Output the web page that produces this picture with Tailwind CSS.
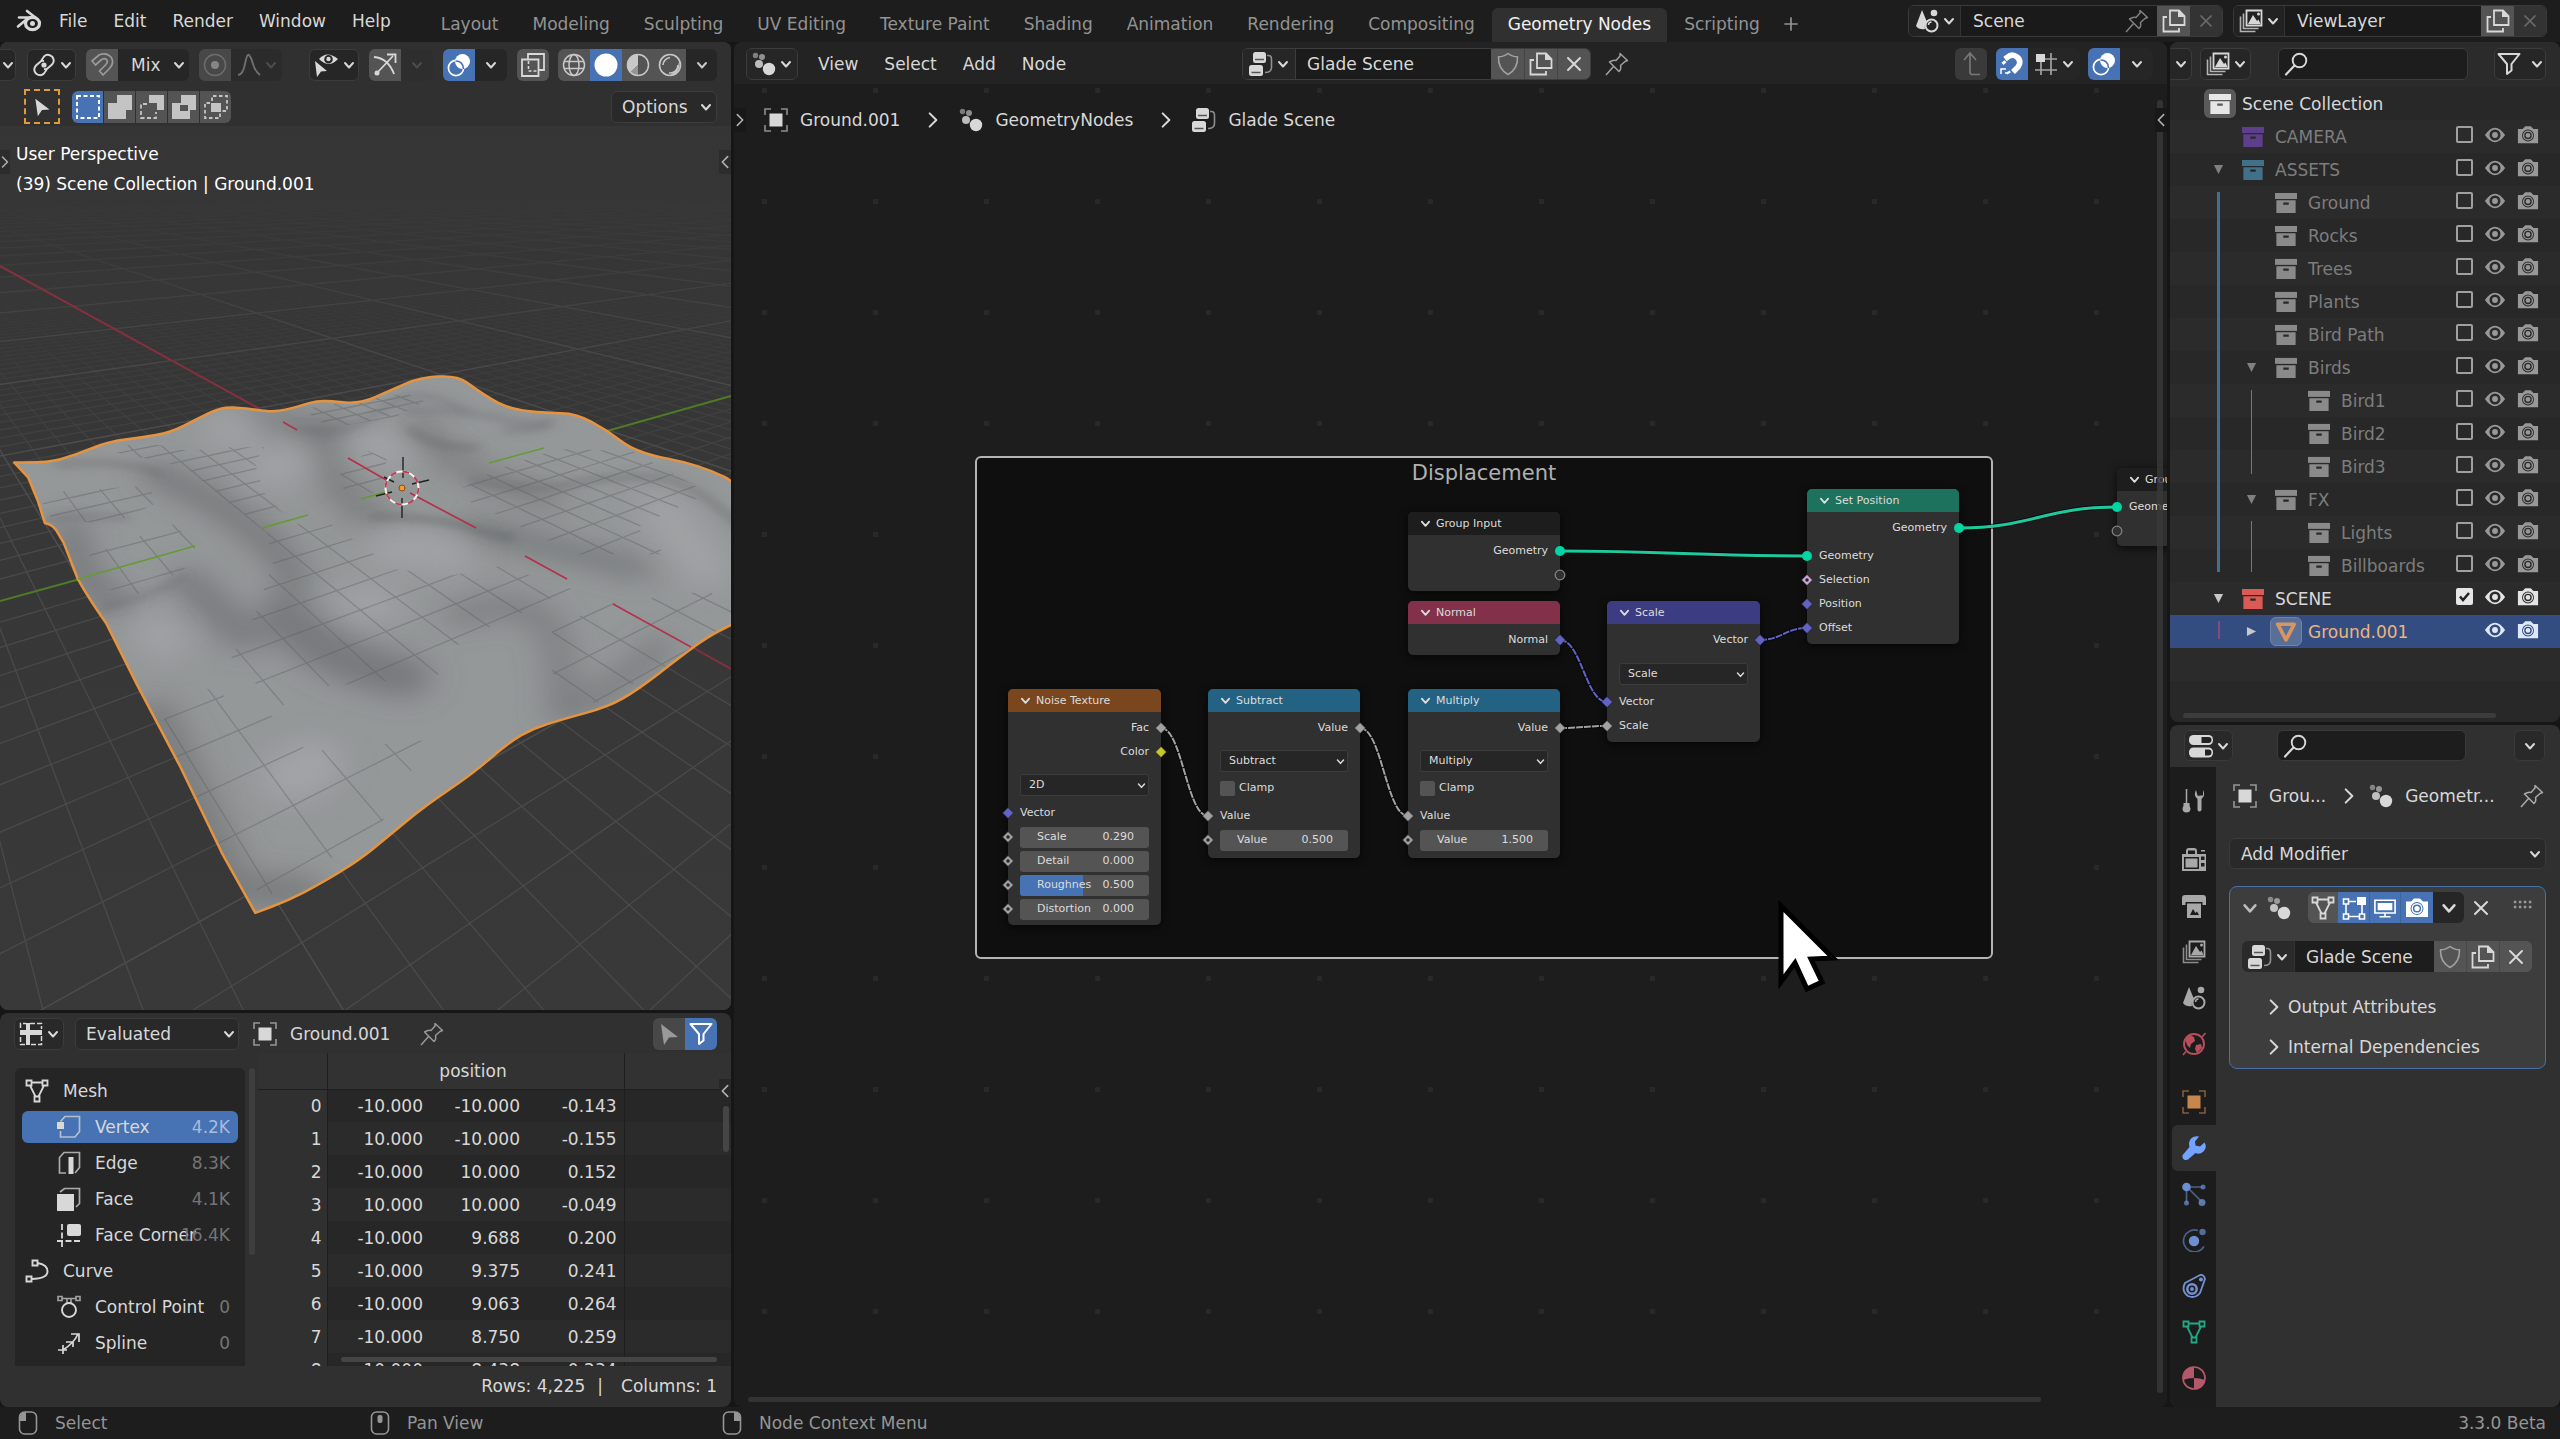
<!DOCTYPE html>
<html lang="en">
<head>
<meta charset="utf-8">
<meta name="viewport" content="width=device-width, initial-scale=1">
<title>Blender</title>
<script src="https://cdn.jsdelivr.net/npm/@tailwindcss/browser@4"></script>
</head>
<body class="flex h-screen flex-col overflow-hidden bg-[#161616] font-['DejaVu_Sans',sans-serif] text-[17px] leading-6 text-[#d8d8d8]">

<!-- Icon sheet -->
<svg class="hidden" aria-hidden="true">
  <symbol id="logo" viewBox="0 0 26 24"><path fill="none" stroke="currentColor" stroke-width="2.600" stroke-linecap="round" stroke-linejoin="round" d="M11 2l9 7M3 8.500h12M2 17.500L11 10"/><ellipse cx="16.500" cy="14.500" rx="7" ry="6.200" fill="none" stroke="currentColor" stroke-width="3.200"/><circle cx="16.500" cy="14.500" r="2.500" fill="currentColor"/></symbol>
  <symbol id="down" viewBox="0 0 12 12"><path fill="none" stroke="currentColor" stroke-width="2" stroke-linecap="round" stroke-linejoin="round" d="M2 4l4 4.500L10 4"/></symbol>
  <symbol id="right" viewBox="0 0 12 18"><path fill="none" stroke="currentColor" stroke-width="1.800" stroke-linecap="round" stroke-linejoin="round" d="M3 3l6 6-6 6"/></symbol>
  <symbol id="left" viewBox="0 0 12 18"><path fill="none" stroke="currentColor" stroke-width="1.800" stroke-linecap="round" stroke-linejoin="round" d="M9 3L3 9l6 6"/></symbol>
  <symbol id="x" viewBox="0 0 24 24"><path fill="none" stroke="currentColor" stroke-width="2" stroke-linecap="round" d="M6 6l12 12M18 6L6 18"/></symbol>
  <symbol id="plus" viewBox="0 0 24 24"><path fill="none" stroke="currentColor" stroke-width="2" d="M4 12h16M12 4v16"/></symbol>
  <symbol id="obj" viewBox="0 0 24 24"><path fill="currentColor" d="M5.500 5.500h13v13h-13z"/><path fill="none" stroke="currentColor" opacity=".6" stroke-width="1.600" d="M1 7V1h6M17 1h6v6M23 17v6h-6M7 23H1v-6"/></symbol>
  <symbol id="geo" viewBox="0 0 24 24"><g fill="currentColor"><circle cx="3.500" cy="3.500" r="2.700" opacity=".5"/><circle cx="10" cy="5" r="3" opacity=".6"/><circle cx="7" cy="12" r="4" opacity=".85"/><circle cx="17" cy="17" r="6.200"/></g></symbol>
  <symbol id="tree" viewBox="0 0 24 24"><g fill="currentColor"><rect x="4" y="0" width="13" height="11" rx="2.500"/><rect x="0" y="13" width="14" height="11" rx="2.500"/></g><path stroke="#555" stroke-width="1.600" d="M6 7.500h9M2.500 20.500h9"/><path fill="none" stroke="currentColor" opacity=".6" stroke-width="1.600" d="M18 3.500h1.500q3 0 3 4v8q0 5-6.500 5"/></symbol>
  <symbol id="pin" viewBox="0 0 24 24"><path fill="none" stroke="currentColor" stroke-width="1.500" stroke-linejoin="round" d="M1 23l8-9M4.500 10q4-2.500 6.500-1.500L15 4V1.500l7.500 7L20 9.500l-4.500 4q1 4-1.500 6z"/></symbol>
  <symbol id="shield" viewBox="0 0 24 24"><path fill="none" stroke="currentColor" stroke-width="1.600" stroke-linejoin="round" d="M12 1.500q4 3.300 9.500 3.300Q22 17 12 22.500 2 17 2.500 4.800 8 4.800 12 1.500z"/></symbol>
  <symbol id="copy" viewBox="0 0 24 24"><path fill="none" stroke="currentColor" stroke-width="1.800" d="M8 1.500h9l5.500 5.500v9H8zM5 8H1.500v14.500H17V19"/><path fill="currentColor" d="M16 1l7 7h-7z"/></symbol>
  <symbol id="magnet" viewBox="0 0 24 24"><path fill="none" stroke="currentColor" stroke-width="1.700" stroke-linejoin="round" d="M2 8l7-6q7-3 12 2 4 6-2 12l-6 6-3.500-4 6-6q3-3 1-5.500-2.500-2-5.500.500L5.500 12z"/></symbol>
  <symbol id="magnetOn" viewBox="0 0 24 24"><path fill="none" stroke="currentColor" stroke-width="5.500" d="M5 7l2-1.500Q12 1 17 5t1 10l-5 5"/><path fill="none" stroke="currentColor" stroke-width="4" d="M3 9.500l2 2.200M9 21.500l-1-2"/><path fill="none" stroke="currentColor" stroke-width="1.500" d="M1 22v-5h5M6 22v-2"/></symbol>
  <symbol id="link" viewBox="0 0 24 24"><circle cx="12" cy="12" r="2.600" fill="currentColor"/><path fill="none" stroke="currentColor" stroke-width="1.900" d="M9 8l3-4.500q3.500-3.500 8 0 3.500 4 0 8L16 15q-1.500 1.500-4 1M15 16l-3 4.500q-3.500 3.500-8 0-3.500-4 0-8L8 9q1.500-1.500 4-1"/></symbol>
  <symbol id="prop" viewBox="0 0 24 24"><circle cx="12" cy="12" r="10.500" fill="none" stroke="currentColor" opacity=".6" stroke-width="1.500"/><circle cx="12" cy="12" r="4" fill="currentColor"/></symbol>
  <symbol id="falloff" viewBox="0 0 24 24"><path fill="none" stroke="currentColor" stroke-width="1.800" d="M1 22q5 0 7-11t4-9 4 9 7 11"/></symbol>
  <symbol id="visSel" viewBox="0 0 26 24"><path fill="currentColor" fill-rule="evenodd" d="M6 6q8-9 19 0-9 10-19 0zm9.500-4a4.300 4.300 0 100 8.600 4.300 4.300 0 000-8.600z"/><circle cx="15.500" cy="6" r="2.200" fill="currentColor"/><path fill="currentColor" d="M2 8l12 10-6 .5L4 24z"/></symbol>
  <symbol id="gizmo" viewBox="0 0 24 24"><path fill="none" stroke="currentColor" stroke-width="1.800" d="M1 4q14 1 20 17M3.500 20.500L20 3M14 1.500h8.500V10"/><circle cx="4" cy="20" r="2.500" fill="currentColor"/></symbol>
  <symbol id="overlay" viewBox="0 0 24 24"><circle cx="15.500" cy="8.500" r="7.500" fill="currentColor"/><circle cx="9" cy="15" r="7.600" fill="none" stroke="currentColor" stroke-width="1.700"/><path fill="none" stroke="#4772b3" stroke-width="1.600" d="M8.500 8a7.500 7.500 0 018 8"/></symbol>
  <symbol id="xray" viewBox="0 0 24 24"><path fill="none" stroke="currentColor" stroke-width="1.800" d="M7 6V1h16v16h-5M1 6.500h16.500V23H1z"/><path fill="none" stroke="currentColor" stroke-width="1.600" stroke-dasharray="3 2" d="M7.500 8v10h9"/></symbol>
  <symbol id="wire" viewBox="0 0 24 24"><g fill="none" stroke="currentColor" stroke-width="1.500"><circle cx="12" cy="12" r="10.500"/><ellipse cx="12" cy="12" rx="5" ry="10.500"/><path d="M2 8.500h20M2 15.500h20"/></g></symbol>
  <symbol id="solid" viewBox="0 0 24 24"><circle cx="12" cy="12" r="11.500" fill="currentColor"/></symbol>
  <symbol id="matp" viewBox="0 0 24 24"><circle cx="12" cy="12" r="10.500" fill="none" stroke="currentColor" stroke-width="1.500"/><path fill="currentColor" d="M12 1v11L4 19.500A11 11 0 0112 1z"/><path fill="currentColor" opacity=".55" d="M12 12v11a11 11 0 01-8-3.500z"/></symbol>
  <symbol id="rend" viewBox="0 0 24 24"><circle cx="12" cy="12" r="10.500" fill="none" stroke="currentColor" stroke-width="1.600"/><path fill="none" stroke="currentColor" stroke-width="1.600" d="M5 12a8 8 0 017-7.500M20 12a8 8 0 01-9 8"/><path fill="currentColor" d="M12 22a10 10 0 009-13q-1 9-9 13z"/></symbol>
  <symbol id="scene" viewBox="0 0 24 24"><path fill="currentColor" d="M7 1l5 12q-3 3-2 7-6 1-9-3z"/><circle cx="19" cy="4" r="3.300" fill="currentColor"/><circle cx="16.500" cy="16.500" r="6" fill="none" stroke="currentColor" stroke-width="2"/><path fill="none" stroke="currentColor" stroke-width="1.500" d="M13.500 16a3 3 0 013-3"/></symbol>
  <symbol id="layers" viewBox="0 0 24 24"><path fill="none" stroke="currentColor" stroke-width="1.800" d="M7.500 1.500h15v15h-15z"/><path fill="currentColor" d="M9 15l5-9 4 6 1.500-1.500 2 4.500z"/><circle cx="19.500" cy="5" r="1.500" fill="currentColor"/><path fill="none" stroke="currentColor" opacity=".8" stroke-width="1.600" d="M4.500 4.500v15h15M1.500 7.500v15h15"/></symbol>
  <symbol id="search" viewBox="0 0 24 24"><circle cx="15.500" cy="8.500" r="6.800" fill="none" stroke="currentColor" stroke-width="1.900"/><path stroke="currentColor" stroke-width="2.200" stroke-linecap="round" d="M10.500 13.500L2 22.500"/></symbol>
  <symbol id="funnel" viewBox="0 0 24 24"><path fill="none" stroke="currentColor" stroke-width="2" stroke-linejoin="round" d="M1.500 2h21l-8 10v6.500L10 22V12z"/></symbol>
  <symbol id="box" viewBox="0 0 24 24"><path fill="currentColor" d="M0 1h24v6.500H0z"/><path fill="currentColor" fill-rule="evenodd" d="M1.500 9h21v14h-21zM9 11.500h6V14H9z"/></symbol>
  <symbol id="eye" viewBox="0 0 24 24"><path fill="currentColor" fill-rule="evenodd" d="M1 12q11-16 22 0-11 16-22 0zm11-6a6 6 0 100 12 6 6 0 000-12z"/><circle cx="12" cy="12" r="3.200" fill="currentColor"/></symbol>
  <symbol id="cam" viewBox="0 0 24 24"><path fill="currentColor" fill-rule="evenodd" d="M1 5.500h5L9 2.500h6l3 3h5V21H1zM12 6a6.500 6.500 0 100 13 6.500 6.500 0 000-13z"/><circle cx="12" cy="12.500" r="4.800" fill="none" stroke="currentColor" stroke-width="1.400"/><circle cx="12" cy="12.500" r="2.600" fill="currentColor"/></symbol>
  <symbol id="mesh" viewBox="0 0 24 24"><path fill="none" stroke="currentColor" stroke-width="1.800" d="M1.500 1.500h5v5h-5zM17.500 1.500h5v5h-5zM9.500 17.500h5v5h-5zM6.500 3.500h11M5 6.500l5.500 11M19 6.500l-5.500 11"/></symbol>
  <symbol id="tri" viewBox="0 0 24 24"><path fill="none" stroke="currentColor" stroke-width="4" stroke-linejoin="round" d="M3 3.500h18L12 20.500z"/></symbol>
  <symbol id="up" viewBox="0 0 24 24"><path fill="none" stroke="currentColor" stroke-width="1.700" d="M5 8l6-7 6 7M11 1v19q0 2.500 2.500 2.500H21"/></symbol>
  <symbol id="gridSnap" viewBox="0 0 24 24"><path fill="currentColor" d="M2 2h9v8H2z"/><path fill="none" stroke="currentColor" opacity=".7" stroke-width="1.700" d="M7 10v13M17 1v22M11 7h12M1 18h22"/></symbol>
  <symbol id="sheet" viewBox="0 0 24 24"><path fill="currentColor" d="M7 1h4v7h12v5H11v10H7V13H1V8h6z"/><path fill="none" stroke="currentColor" stroke-width="1.500" stroke-dasharray="5 2" d="M1.500 6V1.500H7M11 1.500h11.500V7M22.500 14v8.500H12M6 22.500H1.500V14"/></symbol>
  <symbol id="arrow" viewBox="0 0 24 24"><path fill="currentColor" d="M4 2l17 13-9 .5L7 23z"/></symbol>
  <symbol id="vert" viewBox="0 0 24 24"><path fill="none" stroke="currentColor" opacity=".75" stroke-width="1.700" d="M3.500 6.500L8 1.500h14.500v15L18 22H3.500v-6"/><path fill="currentColor" d="M0 7h7v7H0z"/></symbol>
  <symbol id="edge" viewBox="0 0 24 24"><path fill="none" stroke="currentColor" opacity=".75" stroke-width="1.700" d="M9 22H2.500V6.500L7 1.500h15.500v15L18 22"/><path fill="currentColor" d="M11.500 6h5v17h-5z"/></symbol>
  <symbol id="face" viewBox="0 0 24 24"><path fill="currentColor" d="M0 7h17v17H0z"/><path fill="none" stroke="currentColor" opacity=".75" stroke-width="1.700" d="M3 5l4.500-3.500h15v15L19 20"/></symbol>
  <symbol id="corner" viewBox="0 0 24 24"><rect x="10" y="1" width="14" height="12" rx="2" fill="currentColor"/><path fill="none" stroke="currentColor" stroke-width="1.800" stroke-dasharray="6 2.500" d="M5 1v23M0 18h24"/></symbol>
  <symbol id="curve" viewBox="0 0 24 24"><path fill="none" stroke="currentColor" stroke-width="1.900" d="M7.500 1.500h5v5h-5zM1.500 17.500h5v5h-5zM12.500 4q10 1.500 10 8.500T6.500 20"/></symbol>
  <symbol id="cpoint" viewBox="0 0 24 24"><circle cx="12" cy="15" r="7" fill="none" stroke="currentColor" stroke-width="1.900"/><path fill="none" stroke="currentColor" opacity=".7" stroke-width="1.600" d="M1 1.500h4v4H1zM19 1.500h4v4h-4zM5 3.500h14M10 4v4M14 4v4"/></symbol>
  <symbol id="spline" viewBox="0 0 24 24"><path fill="none" stroke="currentColor" stroke-width="1.700" d="M1 19h9M6 14v9M6 19Q17 12 21 3M14 3h8v8M9 11h7v5"/></symbol>
  <symbol id="mouseL" viewBox="0 0 20 24"><rect x="1.500" y="1" width="17" height="22" rx="5" fill="none" stroke="currentColor" stroke-width="1.600"/><path fill="currentColor" d="M2 10V5q1-4 6-4v9z"/></symbol>
  <symbol id="mouseM" viewBox="0 0 20 24"><rect x="1.500" y="1" width="17" height="22" rx="5" fill="none" stroke="currentColor" stroke-width="1.600"/><rect x="7.500" y="4" width="5" height="8" rx="2" fill="currentColor"/></symbol>
  <symbol id="mouseR" viewBox="0 0 20 24"><rect x="1.500" y="1" width="17" height="22" rx="5" fill="none" stroke="currentColor" stroke-width="1.600"/><path fill="currentColor" d="M18 10V5q-1-4-6-4v9z"/></symbol>
  <symbol id="props" viewBox="0 0 24 24"><rect x="0" y="1" width="24" height="10" rx="4.500" fill="currentColor"/><rect x="0" y="13.500" width="24" height="10" rx="4.500" fill="currentColor"/><path fill="#222" d="M12.500 3h7q3 0 3 3t-3 3h-7zM16 15.500h3.500q3 0 3 3t-3 3H16z"/></symbol>
  <symbol id="tools" viewBox="0 0 24 24"><path fill="currentColor" d="M1.500 14h6v2.500l1 3q0 4-4 4t-4-4l1-3zM14 1q-3 5 1.500 9v11q2 3 4 0V10Q24 6 21 1v5.500h-2.500q-1.500.500-3 0z"/><path stroke="currentColor" stroke-width="1.500" d="M4.500 0v15"/></symbol>
  <symbol id="rcam" viewBox="0 0 24 24"><path fill="currentColor" fill-rule="evenodd" d="M0 6h4V3q0-3 3-3h5q3 0 3 3v3h9v17H0zM6 2.500V6h7V2.500zM2 9v12h15V9zM19 8.500V12h3.500V8.500zM19 15v3.500h3.500V15z"/><path fill="currentColor" d="M3.500 10.500h12v9h-12zM19 2h4v1.500h-4z"/></symbol>
  <symbol id="outp" viewBox="0 0 24 24"><path fill="currentColor" d="M3 1h18q3 0 3 3v7h-3.500V8h-17v3H0V4q0-3 3-3z"/><path fill="currentColor" fill-rule="evenodd" d="M5 9.500h14V24H5zM8 21l3-6 2.500 4 1.500-1.500 2 3.500z"/></symbol>
  <symbol id="world" viewBox="0 0 24 24"><circle cx="12" cy="12" r="10" fill="none" stroke="currentColor" stroke-width="1.900"/><path fill="currentColor" d="M3 7l5-4 4 2 1 4-4 3-1 4-3-3zM14 13l5-1 1 4-5 5-2-4z"/><path stroke="currentColor" stroke-width="1.600" d="M20 5l3.500-4M1 23l3-3.500"/></symbol>
  <symbol id="wrench" viewBox="0 0 24 24"><path fill="currentColor" d="M17 .5l-4 5 .5 4 4.500 1 4.500-4q3 5-1 9-4 3.500-8 1.500l-7.500 6.500q-3.500 1.500-5-1-1.500-3 .5-4.500l6-7Q6 6 9 2.500 12.500-.5 17 .5z"/></symbol>
  <symbol id="part" viewBox="0 0 24 24"><g fill="currentColor"><circle cx="4.500" cy="5" r="4.300"/><circle cx="21" cy="5" r="2.500" opacity=".7"/><circle cx="4.500" cy="21" r="2.500" opacity=".7"/><circle cx="20" cy="20.500" r="3.500" opacity=".8"/></g><path stroke="currentColor" opacity=".6" stroke-width="1.700" d="M4 5h17M4.500 5v16M5 5l15 15"/></symbol>
  <symbol id="phys" viewBox="0 0 24 24"><circle cx="12" cy="13" r="5.200" fill="currentColor"/><circle cx="20.500" cy="4" r="3.200" fill="currentColor" opacity=".7"/><path fill="none" stroke="currentColor" opacity=".6" stroke-width="1.700" d="M16 2.500a11 11 0 106 16"/></symbol>
  <symbol id="cons" viewBox="0 0 24 24"><g fill="none" stroke="currentColor" stroke-width="1.800"><path d="M3 9L18 1q4-.5 5 4l-5 14q-5 6-12 3-7-5-3-13z"/><circle cx="10" cy="15" r="4.700" stroke-width="2.500"/><circle cx="10" cy="15" r="1"/></g><circle cx="19" cy="5.500" r="2" fill="currentColor"/></symbol>
  <symbol id="mat" viewBox="0 0 24 24"><circle cx="12" cy="12" r="11" fill="none" stroke="currentColor" stroke-width="1.700"/><path fill="currentColor" d="M12 1v11q-6 0-11 2Q0 2 12 1zM12 12q6 0 11 2-2 9-11 9z"/></symbol>
  <symbol id="editm" viewBox="0 0 24 24"><path fill="none" stroke="currentColor" stroke-width="1.600" d="M1.500 3h5v5h-5zM1.500 18h5v5h-5zM17.500 18h5v5h-5zM4 8v10M6.500 20.500h11M20 9v9M7 5.500h7"/><path fill="currentColor" d="M15 1h9v8h-9z"/></symbol>
  <symbol id="screen" viewBox="0 0 24 24"><path fill="none" stroke="currentColor" stroke-width="1.800" d="M1 3.500h22v14H1zM12 17v4M6 21.500h12"/><path fill="currentColor" d="M4 6.500h16v8H4z"/></symbol>
  <symbol id="grip" viewBox="0 0 24 12"><g fill="currentColor"><path d="M1 1h3v3H1zM7 1h3v3H7zM13 1h3v3h-3zM19 1h3v3h-3zM1 7h3v3H1zM7 7h3v3H7zM13 7h3v3h-3zM19 7h3v3h-3z"/></g></symbol>
  <symbol id="selNew" viewBox="0 0 24 24"><rect x="1" y="1" width="22" height="22" fill="none" stroke="currentColor" stroke-width="2" stroke-dasharray="4 2.500"/></symbol>
  <symbol id="selAdd" viewBox="0 0 24 24"><path fill="currentColor" d="M9 0h15v15h-6v9H0V8h9z"/></symbol>
  <symbol id="selSub" viewBox="0 0 24 24"><path fill="currentColor" d="M9 0h15v15h-7V8H9z"/><path fill="none" stroke="currentColor" stroke-width="1.800" stroke-dasharray="4 2.500" d="M7 9H1v14h15v-6"/></symbol>
  <symbol id="selXor" viewBox="0 0 24 24"><path fill="currentColor" fill-rule="evenodd" d="M9 0h15v15h-6v9H0V8h9zM8 10v6h8v-6z"/></symbol>
  <symbol id="selAnd" viewBox="0 0 24 24"><path fill="currentColor" d="M7 8h10v9H7z"/><path fill="none" stroke="currentColor" stroke-width="1.800" stroke-dasharray="3.500 2.500" d="M6 8H1v15h15v-5M8 6V1h15v15h-5"/></symbol>
</svg>

<!-- Top bar -->
<header class="flex h-[42px] shrink-0 items-center bg-[#1d1d1d] pr-[13px] pl-4">
  <svg class="mr-1 h-6 w-[26px]"><use href="#logo"/></svg>
  <nav class="flex" aria-label="Main menu">
    <button class="px-[13px]">File</button><button class="px-[13px]">Edit</button><button class="px-[13px]">Render</button><button class="px-[13px]">Window</button><button class="px-[13px]">Help</button>
  </nav>
  <div class="ml-5 flex items-end self-stretch whitespace-nowrap text-[#939393]" role="tablist">
    <button class="h-[34px] px-[17px] pb-[2px]">Layout</button><button class="h-[34px] px-[17px] pb-[2px]">Modeling</button><button class="h-[34px] px-[17px] pb-[2px]">Sculpting</button><button class="h-[34px] px-[17px] pb-[2px]">UV Editing</button><button class="h-[34px] px-[17px] pb-[2px]">Texture Paint</button><button class="h-[34px] px-[17px] pb-[2px]">Shading</button><button class="h-[34px] px-[17px] pb-[2px]">Animation</button><button class="h-[34px] px-[17px] pb-[2px]">Rendering</button><button class="h-[34px] px-[17px] pb-[2px]">Compositing</button><button class="h-[34px] rounded-t-md bg-[#303030] px-4 pb-[2px] text-[#f0f0f0]">Geometry Nodes</button><button class="h-[34px] px-[17px] pb-[2px]">Scripting</button>
    <button class="flex h-[34px] items-center px-1 pb-[2px]" aria-label="Add workspace"><svg class="size-5"><use href="#plus"/></svg></button>
  </div>
  <div class="ml-auto flex h-8 gap-[10px]">
    <div class="flex w-[315px] overflow-hidden rounded-md border border-[#3a3a3a]">
      <button class="flex w-[51px] items-center justify-center gap-1 bg-[#222]" aria-label="Browse scene"><svg class="size-6"><use href="#scene"/></svg><svg class="size-3"><use href="#down"/></svg></button>
      <input class="min-w-0 flex-1 border-l border-[#333] bg-[#1a1a1a] pl-3" value="Scene" aria-label="Scene name">
      <button class="flex w-10 items-center justify-center bg-[#1a1a1a] text-[#808080]" aria-label="Pin scene"><svg class="size-6"><use href="#pin"/></svg></button>
      <button class="flex w-[33px] items-center justify-center bg-[#545454]" aria-label="New scene"><svg class="size-6"><use href="#copy"/></svg></button>
      <button class="flex w-8 items-center justify-center bg-[#333] text-[#6c6c6c]" aria-label="Delete scene"><svg class="size-5"><use href="#x"/></svg></button>
    </div>
    <div class="flex w-[314px] overflow-hidden rounded-md border border-[#3a3a3a]">
      <button class="flex w-[50px] items-center justify-center gap-1 bg-[#222]" aria-label="Browse view layer"><svg class="size-6"><use href="#layers"/></svg><svg class="size-3"><use href="#down"/></svg></button>
      <input class="min-w-0 flex-1 border-l border-[#333] bg-[#1a1a1a] pl-3" value="ViewLayer" aria-label="View layer name">
      <button class="flex w-[33px] items-center justify-center bg-[#545454]" aria-label="New view layer"><svg class="size-6"><use href="#copy"/></svg></button>
      <button class="flex w-8 items-center justify-center bg-[#333] text-[#6c6c6c]" aria-label="Delete view layer"><svg class="size-5"><use href="#x"/></svg></button>
    </div>
  </div>
</header>

<main class="grid min-h-0 flex-1 grid-cols-[731fr_1433fr_390fr] gap-[3px]">

  <!-- Left column -->
  <div class="grid min-h-0 min-w-0 grid-rows-[968fr_394fr] gap-[3px]">
    <section class="relative min-h-0 overflow-hidden rounded-lg bg-[#383838]" aria-label="3D Viewport">
      <svg class="absolute inset-0 h-full w-full" viewBox="0 42 731 968" preserveAspectRatio="xMidYMid slice">
        <defs>
          <linearGradient id="sky" x1="0" y1="0" x2="0" y2="1"><stop offset="0" stop-color="#353535"/><stop offset="1" stop-color="#393939"/></linearGradient>
          <linearGradient id="nearFade" gradientUnits="userSpaceOnUse" x1="0" y1="250" x2="0" y2="560"><stop offset="0" stop-color="#000"/><stop offset=".35" stop-color="#444"/><stop offset="1" stop-color="#fff"/></linearGradient>
          <linearGradient id="farFade" gradientUnits="userSpaceOnUse" x1="0" y1="190" x2="0" y2="420"><stop offset="0" stop-color="#000"/><stop offset="1" stop-color="#fff"/></linearGradient>
          <mask id="nearMask" maskUnits="userSpaceOnUse" x="0" y="42" width="731" height="968"><rect y="42" width="731" height="968" fill="url(#nearFade)"/></mask>
          <mask id="farMask" maskUnits="userSpaceOnUse" x="0" y="42" width="731" height="968"><rect y="42" width="731" height="968" fill="url(#farFade)"/></mask>
          <filter id="soft" filterUnits="userSpaceOnUse" x="-100" y="-100" width="1800" height="1800"><feGaussianBlur stdDeviation="34"/></filter>
          <filter id="soft2" filterUnits="userSpaceOnUse" x="-100" y="-100" width="1800" height="1800"><feGaussianBlur stdDeviation="11"/></filter>
          <clipPath id="terrainClip"><path id="terrainClipPath" transform="translate(0 340) scale(.4719 .3827)"/></clipPath>
          <clipPath id="patches">
            <polygon transform="translate(0 340) scale(.4719 .3827)" points="560,480 700,480 840,600 960,615 1060,590 1210,650 1110,710 980,780 925,880 690,905 590,960 490,830 540,720 580,580"/>
            <polygon transform="translate(0 340) scale(.4719 .3827)" points="80,400 320,380 325,430 240,480 110,470"/>
            <polygon transform="translate(0 340) scale(.4719 .3827)" points="190,560 370,480 415,540 390,600 290,665 180,640"/>
            <polygon transform="translate(0 340) scale(.4719 .3827)" points="1180,285 1340,290 1500,400 1350,490 1410,560 1220,560 960,400 1050,340"/>
            <polygon transform="translate(0 340) scale(.4719 .3827)" points="1170,750 1290,690 1500,655 1560,700 1560,760 1260,950 1170,870"/>
            <polygon transform="translate(0 340) scale(.4719 .3827)" points="340,1000 420,900 590,990 650,1075 910,1045 800,1280 560,1460 470,1330"/>
            <polygon transform="translate(0 340) scale(.4719 .3827)" points="480,280 560,280 540,320 560,400 620,480 560,500 390,330 230,290 300,265 400,290"/>
            <polygon transform="translate(0 340) scale(.4719 .3827)" points="640,180 860,140 900,160 840,200 700,230"/>
            <polygon transform="translate(0 340) scale(.4719 .3827)" points="720,350 780,290 820,310 800,400 730,400"/>
          </clipPath>
        </defs>
        <rect y="42" width="731" height="968" fill="url(#sky)"/>
        <g mask="url(#nearMask)"><path id="floorGrid" fill="none" stroke="#4a4a4a" stroke-width="1.300"/></g>
        <g mask="url(#farMask)"><path id="majorGrid" fill="none" stroke="#4c4c4c" stroke-width="1.400"/></g>
        <path stroke="#83303f" stroke-width="2" d="M0 266L260 409M690 646l41 23"/>
        <path stroke="#4f7a26" stroke-width="2" d="M0 601l80-22M607 431l124-35"/>
        <g clip-path="url(#terrainClip)">
          <rect y="340" width="731" height="600" fill="#959899"/>
          <g transform="translate(0 340) scale(.4719 .3827)" fill="none" stroke-linecap="round" stroke-linejoin="round">
            <g filter="url(#soft)" stroke="#67696b">
              <path stroke-width="56" opacity=".75" d="M330 350Q450 410 540 500T620 640"/>
              <path stroke-width="60" opacity=".6" d="M680 250Q700 400 790 460"/>
              <path stroke-width="70" opacity=".65" d="M150 500Q160 640 240 680M400 630Q460 700 520 780"/>
              <path stroke-width="110" opacity=".65" d="M600 720Q700 850 860 880"/>
              <path stroke-width="60" opacity=".55" d="M970 720Q1100 670 1150 730T1190 980Q1290 930 1400 800"/>
              <path stroke-width="44" opacity=".8" d="M1000 490Q1160 540 1360 600"/>
              <path stroke-width="90" opacity=".6" d="M330 980L500 1440L640 1440"/>
              <path stroke-width="50" opacity=".6" d="M880 220Q960 330 1050 370T1170 420"/>
              <path stroke-width="40" opacity=".7" d="M540 190Q640 240 740 225"/>
            </g>
            <g filter="url(#soft)" stroke="#a5a8aa">
              <path stroke-width="130" opacity=".8" d="M620 1140L660 1110"/>
              <path stroke-width="90" opacity=".7" d="M820 540L960 560M330 760L350 790M780 270L830 290M1400 440L1500 600M480 230L500 240M760 680L800 690M570 340L620 320"/>
            </g>
            <g filter="url(#soft2)" stroke="#606264">
              <path stroke-width="14" opacity=".5" d="M120 325Q260 310 340 350"/>
              <path stroke-width="14" opacity=".4" d="M630 232Q740 255 800 190T930 155Q970 170 1000 190M860 182Q980 185 1060 205T1160 215"/>
              <path stroke-width="16" opacity=".5" d="M870 235Q920 285 1010 280M1000 365Q1080 390 1180 385 1280 350 1400 360 1480 380 1560 480"/>
              <path stroke-width="16" opacity=".6" d="M790 462Q920 460 1010 495T1080 510"/>
              <path stroke-width="14" opacity=".45" d="M100 470Q180 455 270 465M1070 235Q1130 240 1170 215M215 700Q300 680 390 620"/>
            </g>
          </g>
          <path id="meshGrid" fill="none" stroke="#5a5c5e" stroke-opacity=".38" stroke-width="1.300" clip-path="url(#patches)"/>
        </g>
        <path id="terrain" transform="translate(0 340) scale(.4719 .3827)" fill="none" stroke="#e6933f" stroke-width="2.500" vector-effect="non-scaling-stroke" stroke-linejoin="round"/>
        <g stroke-width="1.600"><path stroke="#b52f4b" d="M283 422l14 8M348 458l40 23M410 493l66 35M525 556l42 23M613 604l78 43"/><path stroke="#659a35" d="M78 579l117-33M262 528l46-13M361 499l28-8M489 463l55-15"/></g>
        <g stroke="#222" stroke-width="1.400"><path d="M403 457v21M402 498v20M376 496l16-4M412 484l17-4M384 477l10 5"/></g>
        <circle cx="402" cy="488" r="16.500" fill="none" stroke="#f4f4f4" stroke-width="2"/><circle cx="402" cy="488" r="16.500" fill="none" stroke="#c43a55" stroke-width="2" stroke-dasharray="6.500 6.500"/>
        <circle cx="402" cy="488" r="3" fill="#f09a30" stroke="#8a4a10"/>
      </svg>
      <div class="relative bg-[#303030]/90">
        <div class="flex h-[42px] items-center pt-1 pr-[14px]">
          <button class="flex h-8 w-4 items-center justify-center rounded-r-md border border-l-0 border-[#3c3c3c] bg-[#262626]" aria-label="Transform orientation"><svg class="size-3"><use href="#down"/></svg></button>
          <button class="ml-[11px] flex h-8 w-[49px] items-center justify-center rounded-md border border-[#3c3c3c] bg-[#262626]" aria-label="Transform pivot point"><svg class="size-6"><use href="#link"/></svg><svg class="ml-1 size-3"><use href="#down"/></svg></button>
          <div class="ml-[10px] flex h-8 overflow-hidden rounded-md"><button class="flex w-8 items-center justify-center bg-[#545454] text-[#9a9a9a]" aria-label="Snap"><svg class="size-6"><use href="#magnet"/></svg></button><button class="flex w-[71px] items-center justify-between bg-[#262626] pr-1 pl-[13px]">Mix<svg class="size-3"><use href="#down"/></svg></button></div>
          <div class="ml-[10px] flex h-8 overflow-hidden rounded-md"><button class="flex w-8 items-center justify-center bg-[#484848] text-[#858585]" aria-label="Proportional editing"><svg class="size-6"><use href="#prop"/></svg></button><button class="flex w-[51px] items-center justify-center gap-1 bg-[#2b2b2b] text-[#707070]" aria-label="Falloff"><svg class="size-6"><use href="#falloff"/></svg><svg class="size-3 text-[#4c4c4c]"><use href="#down"/></svg></button></div>
          <button class="ml-auto flex h-8 w-[50px] items-center justify-center gap-1 rounded-md border border-[#3c3c3c] bg-[#262626]" aria-label="Object types visibility"><svg class="h-8 w-[26px]"><use href="#visSel"/></svg><svg class="size-3"><use href="#down"/></svg></button>
          <div class="ml-[10px] flex h-8 overflow-hidden rounded-md"><button class="flex w-8 items-center justify-center bg-[#545454]" aria-label="Show gizmo"><svg class="size-6"><use href="#gizmo"/></svg></button><button class="flex w-8 items-center justify-center bg-[#2e2e2e] text-[#4c4c4c]" aria-label="Gizmos"><svg class="size-3"><use href="#down"/></svg></button></div>
          <div class="ml-[10px] flex h-8 overflow-hidden rounded-md"><button class="flex w-8 items-center justify-center bg-[#4772b3] text-white" aria-label="Show overlays"><svg class="size-6"><use href="#overlay"/></svg></button><button class="flex w-8 items-center justify-center bg-[#262626]" aria-label="Overlays"><svg class="size-3"><use href="#down"/></svg></button></div>
          <button class="ml-[10px] flex h-8 w-8 items-center justify-center rounded-md bg-[#545454]" aria-label="Toggle X-ray"><svg class="size-6"><use href="#xray"/></svg></button>
          <div class="ml-[9px] flex h-8 overflow-hidden rounded-md text-[#c8c8c8]">
            <button class="flex w-8 items-center justify-center bg-[#545454]" aria-label="Wireframe"><svg class="size-6"><use href="#wire"/></svg></button><button class="flex w-8 items-center justify-center bg-[#4772b3] text-white" aria-label="Solid"><svg class="size-6"><use href="#solid"/></svg></button><button class="flex w-8 items-center justify-center bg-[#545454]" aria-label="Material preview"><svg class="size-6"><use href="#matp"/></svg></button><button class="flex w-8 items-center justify-center bg-[#545454]" aria-label="Rendered"><svg class="size-6"><use href="#rend"/></svg></button><button class="flex w-[31px] items-center justify-center bg-[#262626]" aria-label="Shading"><svg class="size-3"><use href="#down"/></svg></button>
          </div>
        </div>
        <div class="flex h-[42px] items-center pt-[3px] pr-[14px] pl-6">
          <button class="flex h-[35px] w-9 items-center justify-center border-2 border-dashed border-[#e09a3a]" aria-label="Select tool"><svg class="h-6 w-5"><use href="#arrow"/></svg></button>
          <div class="ml-3 flex h-8 gap-px overflow-hidden rounded-md text-[#c4c4c4]">
            <button class="flex w-[31px] items-center justify-center bg-[#4772b3] text-white" aria-label="Set selection"><svg class="size-6"><use href="#selNew"/></svg></button><button class="flex w-[31px] items-center justify-center bg-[#545454]" aria-label="Extend selection"><svg class="size-6"><use href="#selAdd"/></svg></button><button class="flex w-[31px] items-center justify-center bg-[#545454]" aria-label="Subtract selection"><svg class="size-6"><use href="#selSub"/></svg></button><button class="flex w-[31px] items-center justify-center bg-[#545454]" aria-label="Invert selection"><svg class="size-6"><use href="#selXor"/></svg></button><button class="flex w-[31px] items-center justify-center bg-[#545454]" aria-label="Intersect selection"><svg class="size-6"><use href="#selAnd"/></svg></button>
          </div>
          <button class="ml-auto flex h-8 w-[106px] items-center justify-between rounded-md border border-[#3c3c3c] bg-[#292929] pr-1 pl-[10px]">Options<svg class="size-3"><use href="#down"/></svg></button>
        </div>
      </div>
      <div class="relative px-4 pt-[13px] leading-[30px] text-white"><p>User Perspective</p><p>(39) Scene Collection | Ground.001</p></div>
      <button class="absolute top-[108px] left-0 flex h-6 w-[10px] items-center bg-[#2c2c2c] text-[#b0b0b0]" aria-label="Show toolbar"><svg class="h-4 w-[10px]"><use href="#right"/></svg></button>
      <button class="absolute top-[108px] right-0 flex h-6 w-3 items-center bg-[#2c2c2c] text-[#b0b0b0]" aria-label="Show sidebar"><svg class="h-4 w-3"><use href="#left"/></svg></button>
    </section>

    <!-- Spreadsheet -->
    <section class="relative flex min-h-0 flex-col overflow-hidden rounded-lg bg-[#303030]" aria-label="Spreadsheet">
      <div class="flex h-10 shrink-0 items-center pt-[2px] pr-[14px] pl-[14px]">
        <button class="flex h-8 w-[50px] items-center justify-center gap-1 rounded-md border border-[#3c3c3c] bg-[#292929]" aria-label="Editor type"><svg class="size-6"><use href="#sheet"/></svg><svg class="size-3"><use href="#down"/></svg></button>
        <div class="relative ml-[11px]"><select class="h-8 w-[164px] appearance-none rounded-md border border-[#3c3c3c] bg-[#292929] pl-[10px]" aria-label="Object evaluation state"><option>Evaluated</option><option>Original</option></select><svg class="pointer-events-none absolute top-[10px] right-1 size-3"><use href="#down"/></svg></div>
        <svg class="ml-[14px] size-6"><use href="#obj"/></svg><span class="ml-[13px]">Ground.001</span>
        <button class="ml-[30px] text-[#999]" aria-label="Pin"><svg class="size-6"><use href="#pin"/></svg></button>
        <div class="ml-auto flex h-8 overflow-hidden rounded-md"><button class="flex w-8 items-center justify-center bg-[#484848] text-[#999]" aria-label="Show only selected"><svg class="size-6"><use href="#arrow"/></svg></button><button class="flex w-8 items-center justify-center bg-[#4772b3] text-white" aria-label="Use filter"><svg class="size-6"><use href="#funnel"/></svg></button></div>
      </div>
      <div class="flex min-h-0 flex-1 overflow-hidden">
        <div class="mt-[15px] ml-[15px] w-[230px] shrink-0 overflow-hidden rounded-t-md bg-[#252525] px-[7px] pt-[5px]" id="domains"></div>
        <div class="mt-[15px] ml-1 h-[187px] w-[6px] shrink-0 rounded-full bg-[#3e3e3e]"></div>
        <div class="ml-[3px] min-w-0 flex-1 overflow-hidden bg-[#2b2b2b]">
          <table class="w-full table-fixed border-collapse">
            <colgroup><col class="w-[69px]"><col class="w-[103px]"><col class="w-[97px]"><col class="w-[97px]"><col></colgroup>
            <thead><tr class="h-9 border-b border-[#1e1e1e] bg-[#323232]"><th class="border-r border-[#1e1e1e]"></th><th colspan="3" class="border-r border-[#1e1e1e] pr-[5px] font-normal">position</th><th></th></tr></thead>
            <tbody id="cells"></tbody>
          </table>
        </div>
      </div>
      <div class="flex h-[41px] shrink-0 items-center justify-end gap-3 pr-[14px] pb-[2px] whitespace-pre"><span>Rows: 4,225</span><span>|</span><span class="pl-[6px]">Columns: 1</span></div>
      <div class="absolute right-[14px] bottom-[45px] h-[5px] w-[376px] rounded-full bg-[#454545]"></div>
      <div class="absolute top-[93px] right-[2px] h-[46px] w-[6px] rounded-full bg-[#454545]"></div>
      <button class="absolute top-[66px] right-0 flex h-6 w-3 items-center bg-[#272727] text-[#b0b0b0]" aria-label="Show region"><svg class="h-4 w-3"><use href="#left"/></svg></button>
    </section>
  </div>

  <!-- Node editor -->
  <section class="relative flex min-w-0 flex-col overflow-hidden rounded-lg bg-[#1d1d1d]" aria-label="Geometry Node Editor">
    <div class="relative z-10 flex h-[42px] shrink-0 items-center bg-[#232323] pt-[2px] pr-[14px] pl-3">
      <button class="flex h-8 w-[52px] items-center justify-center gap-1 rounded-md border border-[#3c3c3c] bg-[#262626]" aria-label="Editor type"><svg class="size-6"><use href="#geo"/></svg><svg class="size-3"><use href="#down"/></svg></button>
      <nav class="ml-[7px] flex" aria-label="Node menus"><button class="px-[13px]">View</button><button class="px-[13px]">Select</button><button class="px-[13px]">Add</button><button class="px-[13px]">Node</button></nav>
      <div class="flex-1"></div>
      <div class="flex h-8 overflow-hidden rounded-md border border-[#3c3c3c]">
        <button class="flex w-[52px] items-center justify-center gap-1 bg-[#262626]" aria-label="Browse node tree"><svg class="size-6"><use href="#tree"/></svg><svg class="size-3"><use href="#down"/></svg></button>
        <input class="w-[196px] border-l border-[#3c3c3c] bg-[#1b1b1b] pl-[11px]" value="Glade Scene" aria-label="Node tree name">
        <div class="flex gap-px bg-[#444]"><button class="flex w-[33px] items-center justify-center bg-[#545454] text-[#a0a0a0]" aria-label="Fake user"><svg class="size-6"><use href="#shield"/></svg></button><button class="flex w-8 items-center justify-center bg-[#545454]" aria-label="Duplicate"><svg class="size-6"><use href="#copy"/></svg></button><button class="flex w-8 items-center justify-center bg-[#545454]" aria-label="Unlink"><svg class="size-6"><use href="#x"/></svg></button></div>
      </div>
      <button class="ml-[14px] text-[#a0a0a0]" aria-label="Pin"><svg class="size-6"><use href="#pin"/></svg></button>
      <div class="flex-[2]"></div>
      <button class="flex h-8 w-8 items-center justify-center rounded-md bg-[#3a3a3a] text-[#777]" aria-label="Parent node tree"><svg class="size-6"><use href="#up"/></svg></button>
      <div class="ml-[9px] flex h-8 overflow-hidden rounded-md"><button class="flex w-8 items-center justify-center bg-[#4772b3] text-white" aria-label="Snap"><svg class="size-6"><use href="#magnetOn"/></svg></button><button class="flex w-[52px] items-center justify-center gap-1 bg-[#262626]" aria-label="Snap target"><svg class="size-6"><use href="#gridSnap"/></svg><svg class="size-3"><use href="#down"/></svg></button></div>
      <div class="ml-2 flex h-8 overflow-hidden rounded-md"><button class="flex w-8 items-center justify-center bg-[#4772b3] text-white" aria-label="Show overlays"><svg class="size-6"><use href="#overlay"/></svg></button><button class="flex w-[33px] items-center justify-center bg-[#262626]" aria-label="Overlays"><svg class="size-3"><use href="#down"/></svg></button></div>
    </div>
    <nav class="relative z-10 flex h-[72px] shrink-0 items-center pl-[30px]" aria-label="Node tree path">
      <svg class="size-6"><use href="#obj"/></svg><a href="#object" class="ml-[12px]">Ground.001</a><svg class="mr-[19px] ml-[26px] h-5 w-[14px]"><use href="#right"/></svg>
      <svg class="size-6"><use href="#geo"/></svg><a href="#modifier" class="ml-[12px]">GeometryNodes</a><svg class="mr-[19px] ml-[26px] h-5 w-[14px]"><use href="#right"/></svg>
      <svg class="size-6"><use href="#tree"/></svg><a href="#tree" class="ml-[12px]">Glade Scene</a>
    </nav>

    <!-- Canvas -->
    <svg class="absolute inset-0 h-full w-full"><defs><pattern id="dots" x="28" y="46" width="111" height="111" patternUnits="userSpaceOnUse"><rect width="5" height="5" rx="1" fill="#292929"/></pattern></defs><rect width="100%" height="100%" fill="url(#dots)"/></svg>
    <div class="absolute top-[414px] left-[241px] h-[503px] w-[1018px] rounded-md border-2 border-[#b4b4b4] bg-[#0f0f0f] text-center text-[21px] leading-[30px] text-[#b0b0b0]">Displacement</div>
    <div id="nodes" class="text-[11px] leading-4 text-[#dcdcdc]"></div>
    <svg class="pointer-events-none absolute inset-0 h-full w-full" id="links" fill="none"></svg>
    <svg class="absolute top-[854px] left-[1041px] h-[96px] w-[68px]" viewBox="0 0 68 96"><path fill="#fff" stroke="#000" stroke-width="5" d="M6 10v76l14-19 12 26 15-7-11-23 22-1z"/></svg>
    <div class="absolute top-[58px] right-1 bottom-[14px] w-[6px] rounded-full bg-[#3a3a3a]/80"></div>
    <div class="absolute right-[126px] bottom-[5px] left-[14px] h-[5px] rounded-full bg-[#333]"></div>
    <button class="absolute top-[66px] left-0 z-10 flex h-6 w-3 items-center bg-[#181818] text-[#b0b0b0]" aria-label="Show toolbar"><svg class="h-4 w-3"><use href="#right"/></svg></button>
    <button class="absolute top-[66px] right-0 z-10 flex h-6 w-3 items-center bg-[#181818] text-[#b0b0b0]" aria-label="Show sidebar"><svg class="h-4 w-3"><use href="#left"/></svg></button>
  </section>

  <!-- Right column -->
  <div class="grid min-h-0 min-w-0 grid-rows-[680fr_682fr] gap-[3px]">
    <section class="relative flex min-h-0 flex-col overflow-hidden rounded-lg bg-[#282828]" aria-label="Outliner">
      <div class="flex h-[45px] shrink-0 items-center bg-[#2b2b2b] pr-[14px] pb-px">
        <button class="flex h-8 w-[22px] items-center justify-center rounded-r-md border border-l-0 border-[#3c3c3c] bg-[#262626]" aria-label="Editor type"><svg class="size-3"><use href="#down"/></svg></button>
        <button class="ml-2 flex h-8 w-[51px] items-center justify-center gap-1 rounded-md border border-[#3c3c3c] bg-[#262626]" aria-label="Display mode"><svg class="size-6"><use href="#layers"/></svg><svg class="size-3"><use href="#down"/></svg></button>
        <div class="relative ml-[27px] min-w-0 flex-1"><input class="block h-8 w-full rounded-md border border-[#3c3c3c] bg-[#1d1d1d] pl-9" aria-label="Filter outliner"><svg class="pointer-events-none absolute top-1 left-[6px] size-6"><use href="#search"/></svg></div>
        <button class="ml-[26px] flex h-8 w-[52px] items-center justify-center gap-[10px] rounded-md border border-[#3c3c3c] bg-[#262626]" aria-label="Filter"><svg class="size-6"><use href="#funnel"/></svg><svg class="size-3"><use href="#down"/></svg></button>
      </div>
      <div class="relative">
        <div id="outliner"></div>
        <div class="absolute top-[105px] left-[47px] h-[380px] w-[3px] bg-[#41718f]"></div>
        <div class="absolute top-[303px] left-[81px] h-[84px] w-px bg-[#777]"></div>
        <div class="absolute top-[434px] left-[81px] h-[51px] w-px bg-[#777]"></div>
        <div class="absolute top-[534px] left-[48px] h-[18px] w-[2px] bg-[#8a4a78]"></div>
      </div>
      <div class="absolute right-[64px] bottom-[4px] left-[13px] h-[5px] rounded-full bg-[#3c3c3c]"></div>
    </section>

    <!-- Properties -->
    <section class="flex min-h-0 flex-col overflow-hidden rounded-lg bg-[#303030]" aria-label="Properties">
      <div class="flex h-[42px] shrink-0 items-center pr-[15px] pb-px pl-[14px]">
        <button class="flex h-[31px] w-[49px] items-center justify-center gap-1 rounded-md border border-[#3a3a3a] bg-[#292929]" aria-label="Editor type"><svg class="size-6"><use href="#props"/></svg><svg class="size-3"><use href="#down"/></svg></button>
        <div class="relative ml-[44px] min-w-0 flex-1"><input class="block h-[31px] w-full rounded-md border border-[#3a3a3a] bg-[#1d1d1d] pl-9" aria-label="Search properties"><svg class="pointer-events-none absolute top-1 left-[6px] size-6"><use href="#search"/></svg></div>
        <button class="ml-[48px] flex h-[31px] w-[31px] items-center justify-center rounded-md border border-[#3a3a3a] bg-[#292929]" aria-label="Options"><svg class="size-3"><use href="#down"/></svg></button>
      </div>
      <div class="flex min-h-0 flex-1">
        <div class="flex w-[46px] shrink-0 flex-col bg-[#1c1c1c] pt-[11px] pl-[2px] text-[#a8a8a8]" role="tablist" aria-label="Property tabs">
          <button class="mb-[13px] flex h-[46px] shrink-0 items-center justify-center" aria-label="Tool"><svg class="size-6"><use href="#tools"/></svg></button>
          <button class="flex h-[46px] shrink-0 items-center justify-center" aria-label="Render"><svg class="size-6"><use href="#rcam"/></svg></button>
          <button class="flex h-[46px] shrink-0 items-center justify-center" aria-label="Output"><svg class="size-6"><use href="#outp"/></svg></button>
          <button class="flex h-[46px] shrink-0 items-center justify-center" aria-label="View layer"><svg class="size-6"><use href="#layers"/></svg></button>
          <button class="flex h-[46px] shrink-0 items-center justify-center" aria-label="Scene"><svg class="size-6"><use href="#scene"/></svg></button>
          <button class="mb-3 flex h-[46px] shrink-0 items-center justify-center text-[#b54f5e]" aria-label="World"><svg class="size-6"><use href="#world"/></svg></button>
          <button class="flex h-[46px] shrink-0 items-center justify-center text-[#c8864c]" aria-label="Object"><svg class="size-6"><use href="#obj"/></svg></button>
          <button class="flex h-[46px] shrink-0 items-center justify-center rounded-l-md bg-[#303030] text-[#74a2ff]" aria-label="Modifiers"><svg class="size-6"><use href="#wrench"/></svg></button>
          <button class="flex h-[46px] shrink-0 items-center justify-center text-[#6b8fd0]" aria-label="Particles"><svg class="size-6"><use href="#part"/></svg></button>
          <button class="flex h-[46px] shrink-0 items-center justify-center text-[#6b8fd0]" aria-label="Physics"><svg class="size-6"><use href="#phys"/></svg></button>
          <button class="flex h-[46px] shrink-0 items-center justify-center text-[#7492d2]" aria-label="Constraints"><svg class="size-6"><use href="#cons"/></svg></button>
          <button class="flex h-[46px] shrink-0 items-center justify-center text-[#22a884]" aria-label="Data"><svg class="size-6"><use href="#mesh"/></svg></button>
          <button class="flex h-[46px] shrink-0 items-center justify-center text-[#b3596a]" aria-label="Material"><svg class="size-6"><use href="#mat"/></svg></button>
        </div>
        <div class="min-w-0 flex-1 pr-[14px] pl-[13px]">
          <div class="flex h-[71px] items-center pr-[2px] pb-[14px] pl-[4px]">
            <svg class="size-6"><use href="#obj"/></svg><span class="ml-3">Grou...</span><svg class="mr-[13px] ml-[16px] h-5 w-[14px]"><use href="#right"/></svg><svg class="size-6"><use href="#geo"/></svg><span class="ml-3">Geometr...</span>
            <button class="ml-auto text-[#aaa]" aria-label="Pin"><svg class="size-6"><use href="#pin"/></svg></button>
          </div>
          <button class="flex h-[31px] w-full items-center justify-between rounded-md border border-[#3a3a3a] bg-[#292929] pr-1 pl-[11px]">Add Modifier<svg class="size-3"><use href="#down"/></svg></button>
          <div class="mt-[17px] h-[183px] rounded-lg border border-[#4a70a8] bg-[#3d3d3d] px-3 pt-[5px]">
            <div class="flex h-[31px] items-center">
              <button aria-label="Collapse"><svg class="size-4 text-[#bbb]"><use href="#down"/></svg></button><svg class="ml-[9px] size-6"><use href="#geo"/></svg>
              <div class="ml-[17px] flex h-[31px] overflow-hidden rounded-md"><button class="flex w-[30px] items-center justify-center bg-[#545454]" aria-label="On cage"><svg class="size-6"><use href="#mesh"/></svg></button><button class="flex w-[31px] items-center justify-center bg-[#4772b3] text-white" aria-label="Edit mode"><svg class="size-6"><use href="#editm"/></svg></button><button class="flex w-8 items-center justify-center border-x border-[#3f659f] bg-[#4772b3] text-white" aria-label="Realtime"><svg class="size-[22px]"><use href="#screen"/></svg></button><button class="flex w-8 items-center justify-center bg-[#4772b3] text-white" aria-label="Render"><svg class="size-6"><use href="#cam"/></svg></button><button class="flex w-[31px] items-center justify-center bg-[#262626]" aria-label="More"><svg class="size-4"><use href="#down"/></svg></button></div>
              <button class="ml-[5px]" aria-label="Remove modifier"><svg class="size-6"><use href="#x"/></svg></button>
              <svg class="mb-[5px] ml-auto h-[10px] w-5 text-[#9a9a9a]"><use href="#grip"/></svg>
            </div>
            <div class="mt-[18px] mr-[1px] flex h-[31px] overflow-hidden rounded-md">
              <button class="flex w-[52px] items-center justify-center gap-1 bg-[#2a2a2a]" aria-label="Browse"><svg class="size-6"><use href="#tree"/></svg><svg class="size-3"><use href="#down"/></svg></button>
              <input class="min-w-0 flex-1 border-l border-[#333] bg-[#1d1d1d] pl-[11px]" value="Glade Scene" aria-label="Node group">
              <div class="flex gap-px bg-[#484848]"><button class="flex w-8 items-center justify-center bg-[#545454] text-[#a0a0a0]" aria-label="Fake user"><svg class="size-6"><use href="#shield"/></svg></button><button class="flex w-8 items-center justify-center bg-[#545454]" aria-label="Duplicate"><svg class="size-6"><use href="#copy"/></svg></button><button class="flex w-8 items-center justify-center bg-[#545454]" aria-label="Unlink"><svg class="size-6"><use href="#x"/></svg></button></div>
            </div>
            <button class="mt-[15px] ml-6 flex h-10 items-center gap-[6px]"><svg class="h-5 w-4"><use href="#right"/></svg>Output Attributes</button>
            <button class="ml-6 flex h-10 items-center gap-[6px]"><svg class="h-5 w-4"><use href="#right"/></svg>Internal Dependencies</button>
          </div>
        </div>
      </div>
    </section>
  </div>
</main>

<!-- Status bar -->
<footer class="grid h-8 shrink-0 grid-cols-[352fr_352fr_1856fr] items-center bg-[#1d1d1d] text-[#959595]">
  <span class="flex items-center pl-[18px]"><svg class="mr-[17px] h-6 w-5"><use href="#mouseL"/></svg>Select</span>
  <span class="flex items-center pl-[18px]"><svg class="mr-[17px] h-6 w-5"><use href="#mouseM"/></svg>Pan View</span>
  <span class="flex items-center pr-[14px] pl-[18px]"><svg class="mr-[17px] h-6 w-5"><use href="#mouseR"/></svg>Node Context Menu<span class="ml-auto">3.3.0 Beta</span></span>
</footer>

<script>
const $ = id => document.getElementById(id);
const icon = (name, cls) => `<svg class="${cls}"><use href="#${name}"/></svg>`;

// Outliner
const rows = [
  [0,'Scene Collection','root'],[1,'CAMERA','#5d3f8c'],[1,'ASSETS','#417089','open'],[2,'Ground'],[2,'Rocks'],[2,'Trees'],[2,'Plants'],[2,'Bird Path'],
  [2,'Birds','','open'],[3,'Bird1'],[3,'Bird2'],[3,'Bird3'],[2,'FX','','open'],[3,'Lights'],[3,'Billboards'],[1,'SCENE','#dc5a56','open'],[2,'Ground.001','mesh','shut']
];
$('outliner').innerHTML = rows.map(([lvl, name, kind, fold], i) => {
  const root = kind === 'root', sel = kind === 'mesh', live = root || sel || name === 'SCENE';
  const bg = sel ? 'bg-[#334d80]' : i % 2 ? 'bg-[#2b2b2b]' : 'bg-[#282828]';
  const tone = sel ? 'text-[#edb57c]' : live ? 'text-[#d8d8d8]' : 'text-[#7d7d7d]';
  const ctl = sel ? 'text-[#dfe8f8]' : live ? 'text-[#e4e4e4]' : 'text-[#989898]';
  const arrow = fold ? `<button class="${live ? 'text-[#c8c8c8]' : 'text-[#808080]'}" aria-label="Toggle ${name}"><svg class="block size-[11px]" viewBox="0 0 12 12"><path fill="currentColor" d="${fold === 'open' ? 'M1 1h10L6 11z' : 'M1 1l10 5L1 11z'}"/></svg></button>` : '';
  const col = kind && kind[0] === '#' ? kind : root ? '#e6e6e6' : sel ? '#d99560' : '#8a8a8a';
  const wrap = root ? 'bg-[#5a5a5a]' : sel ? 'border border-[#6d83a9] bg-[#5a6f98]' : '';
  const check = sel ? '' : `<input type="checkbox" ${name === 'SCENE' ? 'checked' : ''} aria-label="Enable ${name}" class="peer block size-[17px] appearance-none rounded-[2px] border-2 border-[#a0a0a0] checked:border-[#e6e6e6] checked:bg-[#e6e6e6]"><svg class="pointer-events-none absolute top-0 left-0 hidden size-[17px] peer-checked:block" viewBox="0 0 17 17"><path fill="none" stroke="#222" stroke-width="2.500" d="M4 8.500l3 3.500 6-7"/></svg>`;
  return `<div class="flex h-[33px] items-center pr-[21px] ${bg} ${tone}">
    <div style="width:${lvl * 33 + 21}px" class="flex shrink-0 justify-end">${arrow}</div>
    <div class="ml-[13px] flex h-[29px] w-8 shrink-0 items-center justify-center rounded-md ${wrap}" style="color:${col}">${icon(sel ? 'tri' : 'box', 'size-[22px]')}</div>
    <span class="ml-[6px] flex-1">${name}</span>
    ${root ? '' : `<div class="flex items-center gap-[11px] pb-1 ${ctl}"><div class="relative size-[17px]">${check}</div>
    <button aria-label="Hide ${name}">${icon('eye', 'block size-[22px]')}</button><button aria-label="Disable ${name} in renders">${icon('cam', 'block size-[22px]')}</button></div>`}
  </div>`;
}).join('') + '<div class="h-[33px] bg-[#2b2b2b]"></div>';

// Spreadsheet domains
$('domains').innerHTML = [['mesh','Mesh'],['vert','Vertex','4.2K'],['edge','Edge','8.3K'],['face','Face','4.1K'],['corner','Face Corner','16.4K'],['curve','Curve'],['cpoint','Control Point','0'],['spline','Spline','0']]
  .map(([ic, name, n]) => `<div class="flex h-9 items-center"><button class="relative flex h-8 w-full items-center rounded-md text-left ${name === 'Vertex' ? 'bg-[#4772b3]' : ''} ${n ? 'pl-[35px]' : 'pl-[3px]'}">${icon(ic, 'mr-[14px] size-6')}<span class="whitespace-nowrap">${name}</span>${n ? `<span class="absolute right-[8px] ${name === 'Vertex' ? 'text-[#a9bbdb]' : 'text-[#757575]'}">${n}</span>` : ''}</button></div>`).join('');

// Spreadsheet cells
$('cells').innerHTML = [['-10.000','-10.000','-0.143'],['10.000','-10.000','-0.155'],['-10.000','10.000','0.152'],['10.000','10.000','-0.049'],['-10.000','9.688','0.200'],['-10.000','9.375','0.241'],['-10.000','9.063','0.264'],['-10.000','8.750','0.259'],['-10.000','8.438','0.234']]
  .map((r, i) => `<tr class="h-[33px] ${i % 2 ? 'bg-[#2b2b2b]' : 'bg-[#272727]'}"><th class="border-r border-[#1e1e1e] bg-[#303030] pr-[5px] text-right font-normal">${i}</th><td class="pr-[7px] text-right">${r[0]}</td><td class="pr-[7px] text-right">${r[1]}</td><td class="border-r border-[#1e1e1e] pr-[7px] text-right">${r[2]}</td><td></td></tr>`).join('');

// Node sockets and rows
const GREY = '#a1a1a1', VEC = '#6363c7', GEO = '#00d6a3';
const socket = (kind, color, side) => {
  const pos = side === 'out' ? 'absolute top-[6px] -right-[6px] z-10 size-3' : 'absolute top-[6px] -left-[6px] z-10 size-3';
  const shape = kind === 'dot' ? `<circle cx="6" cy="6" r="5" fill="${color}"/>`
    : kind === 'ext' ? `<circle cx="6" cy="6" r="4.800" fill="#303030" stroke="#808080" stroke-width="1.300"/>`
    : `<path fill="${color}" stroke="#181818" stroke-width=".6" d="M6 .5L11.500 6 6 11.500.5 6z"/>${kind === 'field' ? '<circle cx="6" cy="6" r="1.700" fill="#222"/>' : ''}`;
  return `<svg class="${pos}" viewBox="0 0 12 12">${shape}</svg>`;
};
const out = (label, kind, color) => `<div class="relative flex h-6 items-center justify-end pr-3">${label}${socket(kind, color, 'out')}</div>`;
const inp = (label, kind, color) => `<div class="relative flex h-6 items-center pl-3">${label}${socket(kind, color, 'in')}</div>`;
const pick = v => `<div class="relative mx-3"><select aria-label="${v}" class="block h-[22px] w-full appearance-none rounded-[3px] border border-[#3c3c3c] bg-[#262626] pl-2"><option>${v}</option></select><svg class="pointer-events-none absolute top-[7px] right-[3px] size-[9px]"><use href="#down"/></svg></div>`;
const field = (label, v, fill) => `<div class="relative flex h-6 items-center px-3">${socket('field', GREY, 'in')}<label class="relative flex h-[21px] w-full items-center overflow-hidden rounded-[3px] bg-[#545454] pl-[17px]">${fill ? `<span class="absolute inset-y-0 left-0 bg-[#4772b3]" style="width:${fill}%"></span>` : ''}<span class="relative">${label}</span><input class="absolute right-[15px] w-10 bg-transparent text-right" value="${v}"></label></div>`;
const clamp = '<label class="mt-1 flex h-6 items-center gap-1 pl-3"><input type="checkbox" class="size-[15px] appearance-none rounded-[2px] bg-[#545454]">Clamp</label>';
const gap = cls => `<div class="${cls}"></div>`;
const node = (place, head, title, body) => `<article class="absolute ${place} rounded-[5px] bg-[#303030] shadow-[0_2px_8px_rgba(0,0,0,0.7)]"><h3 class="flex h-[23px] items-center gap-[5px] rounded-t-[5px] pl-3 ${head}">${icon('down', 'size-[11px]')}${title}</h3><div class="pt-1">${body}</div></article>`;
const math = (name, v) => out('Value', 'dia', GREY) + gap('h-[10px]') + pick(name) + clamp + gap('h-1') + inp('Value', 'dia', GREY) + field('Value', v);
$('nodes').innerHTML = [
  node('top-[470px] left-[674px] h-[79px] w-[152px]', 'bg-[#1d1d1d]', 'Group Input', out('Geometry', 'dot', GEO) + out('', 'ext')),
  node('top-[559px] left-[674px] h-[54px] w-[152px]', 'bg-[#83314a]', 'Normal', out('Normal', 'dia', VEC)),
  node('top-[647px] left-[274px] h-[236px] w-[153px]', 'bg-[#79461d]', 'Noise Texture', out('Fac', 'dia', GREY) + out('Color', 'dia', '#c7c729') + gap('h-[10px]') + pick('2D') + gap('h-[5px]') + inp('Vector', 'dia', VEC) + field('Scale', '0.290') + field('Detail', '0.000') + field('Roughnes', '0.500', 49) + field('Distortion', '0.000')),
  node('top-[647px] left-[474px] h-[169px] w-[152px]', 'bg-[#246283]', 'Subtract', math('Subtract', '0.500')),
  node('top-[647px] left-[674px] h-[169px] w-[152px]', 'bg-[#246283]', 'Multiply', math('Multiply', '1.500')),
  node('top-[559px] left-[873px] h-[141px] w-[153px]', 'bg-[#3c3c83]', 'Scale', out('Vector', 'dia', VEC) + gap('h-[11px]') + pick('Scale') + gap('h-[5px]') + inp('Vector', 'dia', VEC) + inp('Scale', 'dia', GREY)),
  node('top-[447px] left-[1073px] h-[155px] w-[152px]', 'bg-[#1d725e]', 'Set Position', out('Geometry', 'dot', GEO) + gap('h-1') + inp('Geometry', 'dot', GEO) + inp('Selection', 'field', '#cca6d6') + inp('Position', 'dia', VEC) + inp('Offset', 'dia', VEC)),
  node('top-[426px] left-[1383px] h-[78px] w-[152px]', 'bg-[#1d1d1d]', 'Group Output', inp('Geometry', 'dot', GEO) + inp('', 'ext'))
].join('');

// Noodles between sockets
$('links').innerHTML = [
  [826,509,1073,514,'#1ec99d',3],[1225,486,1383,465,'#1ec99d',3],[826,598,873,660,'#6363c7',2,1],[1026,598,1073,586,'#6363c7',2,1],[826,686,873,684,'#a1a1a1',2,1],[427,686,474,774,'#a1a1a1',2,1],[626,686,674,774,'#a1a1a1',2,1]
].map(([x, y, X, Y, c, w, dash]) => {
  const d = `M${x} ${y}C${x + (X - x) * .45} ${y} ${X - (X - x) * .45} ${Y} ${X} ${Y}`;
  return `<path d="${d}" stroke="#000" stroke-opacity=".6" stroke-width="${w + 2}"/><path d="${d}" stroke="${c}" stroke-width="${w}" ${dash ? 'stroke-dasharray="7 1"' : ''}/>`;
}).join('');

// Terrain outline, smoothed through midpoints
const pts = [30,320,100,322,160,300,230,265,300,255,360,242,420,205,470,175,520,178,580,189,630,175,680,155,760,169,830,130,890,98,970,93,1010,130,1075,180,1160,191,1220,192,1285,235,1350,295,1480,325,1590,390,1590,720,1548,745,1500,775,1440,830,1350,915,1290,958,1190,992,1130,1015,1080,1050,1000,1135,900,1218,820,1300,760,1360,680,1420,610,1465,541,1497];
let d = 'M30 320';
for (let i = 2; i < pts.length - 2; i += 2) d += `Q${pts[i]} ${pts[i + 1]} ${(pts[i] + pts[i + 2]) / 2} ${(pts[i + 1] + pts[i + 3]) / 2}`;
d += 'L541 1497L470 1340 380 1110 290 900 225 740Q190 680 165 625L135 530 118 495Q110 482 95 478L80 420 60 360Z';
$('terrain').setAttribute('d', d);
$('terrainClipPath').setAttribute('d', d);

// Ground plane grid in perspective: one line per metre near by, one per ten metres far off
const proj = (u, v) => { const w = 1 - .0335 * u + .022 * v; return w < .12 ? null : [(402 + 5.75 * u + 34.1 * v) / w, (488 - 5.71 * u + 3.73 * v) / w]; };
const line = (f, from, to) => { let s = '', pen = false; for (let t = from; t <= to; t += .5) { const p = f(t); if (!p) { pen = false; continue; } s += `${pen ? 'L' : 'M'}${p[0].toFixed(1)} ${p[1].toFixed(1)}`; pen = true; } return s; };
const grid = (lo, hi, step, from, to) => { let s = ''; for (let k = lo; k <= hi; k += step) if (k) s += line(t => proj(t, k), from, to) + line(t => proj(k, t), from, to); return s; };
const near = grid(-60, 40, 1, -90, 60);
$('floorGrid').setAttribute('d', near);
$('majorGrid').setAttribute('d', grid(-200, 200, 10, -250, 250));
$('meshGrid').setAttribute('d', near);
</script>
</body>
</html>
